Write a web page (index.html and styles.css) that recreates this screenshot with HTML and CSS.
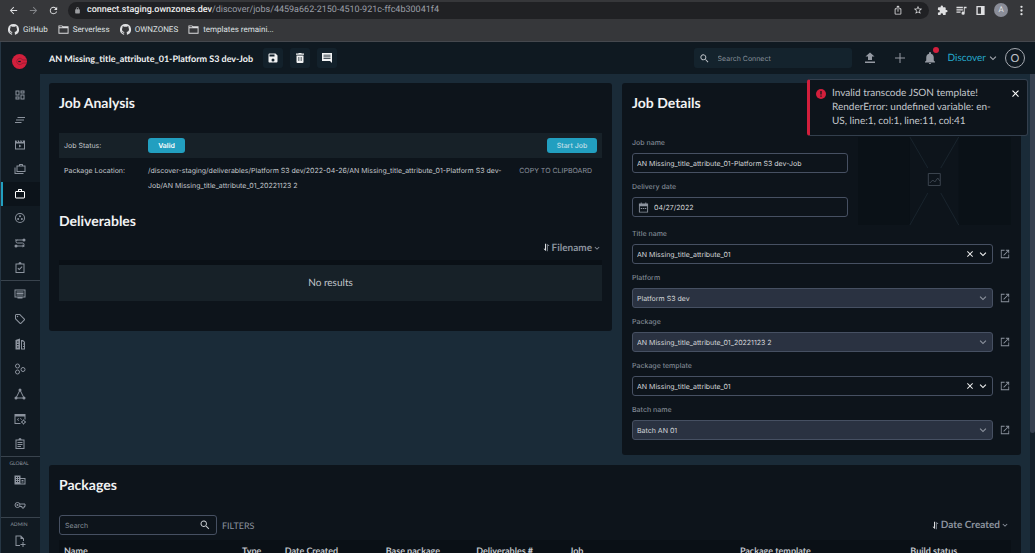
FILE: index.html
```html
<!doctype html>
<html lang="en">
  <head>
    <meta charset="UTF-8" />
    <meta name="viewport" content="width=device-width, initial-scale=1.0" />
    <title>AN Missing_title_attribute_01-Platform S3 dev-Job</title>
    <link rel="stylesheet" href="styles.css">
  </head>
  <body>
    <svg class="sprite" aria-hidden="true">
      <symbol id="back" viewBox="0 0 24 24"><path d="M20 11H7.8l5.6-5.6L12 4l-8 8 8 8 1.4-1.4L7.8 13H20z"/></symbol>
      <symbol id="forward" viewBox="0 0 24 24"><path d="M12 4l-1.4 1.4 5.6 5.6H4v2h12.2l-5.6 5.6L12 20l8-8z"/></symbol>
      <symbol id="reload" viewBox="0 0 24 24"><path d="M17.65 6.35A8 8 0 1 0 19.73 14h-2.08A6 6 0 1 1 12 6c1.66 0 3.14.69 4.22 1.78L13 11h7V4z"/></symbol>
      <symbol id="lock" viewBox="0 0 24 24"><path d="M18 8h-1V6A5 5 0 0 0 7 6v2H6a2 2 0 0 0-2 2v10c0 1.1.9 2 2 2h12a2 2 0 0 0 2-2V10a2 2 0 0 0-2-2zM9 6a3 3 0 0 1 6 0v2H9z"/></symbol>
      <symbol id="share" viewBox="0 0 24 24"><path d="M16 5l-1.4 1.4-1.6-1.6V16h-2V4.8L9.400 6.400 8 5l4-4zM20 10v11c0 1.100-.9 2-2 2H6a2 2 0 0 1-2-2V10c0-1.100.9-2 2-2h3v2H6v11h12V10h-3V8h3a2 2 0 0 1 2 2z"/></symbol>
      <symbol id="star" viewBox="0 0 24 24"><path d="M22 9.240l-7.190-.620L12 2 9.190 8.630 2 9.240l5.460 4.730L5.820 21 12 17.270 18.180 21l-1.630-7.030zM12 15.400l-3.760 2.270 1-4.280-3.320-2.880 4.380-.380L12 6.100l1.710 4.040 4.380.380-3.320 2.880 1 4.280z"/></symbol>
      <symbol id="puzzle" viewBox="0 0 24 24"><path d="M20.500 11H19V7a2 2 0 0 0-2-2h-4V3.500a2.500 2.500 0 0 0-5 0V5H4a2 2 0 0 0-2 2v3.800h1.500a2.700 2.700 0 0 1 0 5.400H2V20c0 1.100.9 2 2 2h3.800v-1.500a2.700 2.700 0 0 1 5.400 0V22H17a2 2 0 0 0 2-2v-4h1.500a2.500 2.500 0 0 0 0-5z"/></symbol>
      <symbol id="playlist" viewBox="0 0 24 24"><path d="M1 4h14v3H1zM1 9h14v3H1zM1 14h9v3H1zM17 4h6v3h-4v11a3.500 3.500 0 1 1-2-3.200z"/></symbol>
      <symbol id="panel" viewBox="0 0 24 24"><path d="M3 2h18v20H3zM6 5v14h7V5z" fill-rule="evenodd"/></symbol>
      <symbol id="dots" viewBox="0 0 24 24"><circle cx="12" cy="4" r="2.500"/><circle cx="12" cy="12" r="2.500"/><circle cx="12" cy="20" r="2.500"/></symbol>
      <symbol id="github" viewBox="0 0 16 16"><path d="M8 0a8 8 0 0 0-2.530 15.590c.4.070.55-.170.55-.380v-1.490c-2.230.480-2.700-.940-2.700-.940-.360-.930-.890-1.180-.890-1.180-.730-.5.060-.490.060-.490.800.060 1.230.830 1.230.830.720 1.220 1.870.870 2.330.660.070-.520.280-.870.510-1.070-1.780-.2-3.640-.890-3.640-3.950 0-.870.310-1.590.820-2.150-.080-.2-.360-1.020.080-2.120 0 0 .670-.210 2.200.820a7.600 7.600 0 0 1 4 0c1.530-1.040 2.200-.820 2.200-.820.440 1.100.160 1.920.080 2.120.510.560.820 1.270.820 2.150 0 3.070-1.870 3.750-3.650 3.950.290.250.540.730.540 1.480v2.200c0 .210.150.460.550.380A8 8 0 0 0 8 0z"/></symbol>
      <symbol id="folder" viewBox="0 0 24 24"><path d="M1 3h8l2 2h12v16H1zM3 9v10h18V9zM3 5v2h18V7H10.200l-2-2z" fill-rule="evenodd"/></symbol>
      <symbol id="logo" viewBox="0 0 24 24"><circle cx="12" cy="12" r="12"/><path class="cut" d="M24 9.500h-7a5 5 0 1 0 0 5H24"/><path class="slot" d="M10 11h4v2h-4z"/></symbol>
      <symbol id="save" viewBox="0 0 24 24"><path d="M17 3H5a2 2 0 0 0-2 2v14c0 1.100.9 2 2 2h14a2 2 0 0 0 2-2V7zm-5 16a3 3 0 1 1 0-6 3 3 0 0 1 0 6zm3-10H5V5h10z"/></symbol>
      <symbol id="trash" viewBox="0 0 24 24"><path fill-rule="evenodd" d="M5 7h14v13a2 2 0 0 1-2 2H7a2 2 0 0 1-2-2zM15.500 3l-1-1h-5l-1 1H4v2.500h16V3zM9 10v8h1.500v-8zM13.500 10v8H15v-8z"/></symbol>
      <symbol id="comment" viewBox="0 0 24 24"><path fill-rule="evenodd" d="M22 2H2v16h16l4 4zM5 5.500h14v1.700H5zM5 9h14v1.700H5zM5 12.500h14v1.700H5z"/></symbol>
      <symbol id="search" viewBox="0 0 24 24"><path d="M15.500 14h-.8l-.3-.3a6.500 6.500 0 1 0-.7.7l.3.300v.8l5 5 1.500-1.500zm-6 0a4.500 4.500 0 1 1 0-9 4.500 4.500 0 0 1 0 9z"/></symbol>
      <symbol id="upload" viewBox="0 0 24 24"><path d="M8 16h8v-7h5l-9-8-9 8h5zM2 19h20v3H2z"/></symbol>
      <symbol id="plus" viewBox="0 0 24 24"><path d="M22 13h-9v9h-2v-9H2v-2h9V2h2v9h9z"/></symbol>
      <symbol id="bell" viewBox="0 0 24 24"><path d="M12 24c1.300 0 2.300-1 2.300-2H9.700c0 1 1 2 2.300 2zm7.500-7v-6c0-3.500-2-6.500-5.500-7.300V2a2 2 0 0 0-4 0v1.700C6.500 4.500 4.500 7.500 4.500 11v6L2 19.500V21h20v-1.500z"/></symbol>
      <symbol id="chevron" viewBox="0 0 24 24"><path d="M4.500 6.500L12 14l7.500-7.500L22 9 12 19 2 9z"/></symbol>
      <symbol id="close" viewBox="0 0 24 24"><path d="M21 5l-2-2-7 7-7-7-2 2 7 7-7 7 2 2 7-7 7 7 2-2-7-7z"/></symbol>
      <symbol id="dashboard" viewBox="0 0 24 24"><path d="M19 5v2h-4V5h4M9 5v6H5V5h4m10 8v6h-4v-6h4M9 17v2H5v-2h4M21 3h-8v6h8zM11 3H3v10h8zm10 8h-8v10h8zm-10 4H3v6h8z"/></symbol>
      <symbol id="lines" viewBox="0 0 24 24"><path d="M7 6h15v2H7zM4 11h16v2H4zM2 16h13v2H2z"/></symbol>
      <symbol id="film" viewBox="0 0 24 24"><path fill-rule="evenodd" d="M2 3h3l1 3h2L7 3h3l1 3h2l-1-3h3l1 3h2l-1-3h5v18H2zM4 9v10h16V9zM10 11l5 3-5 3z"/></symbol>
      <symbol id="cases" viewBox="0 0 24 24"><path fill-rule="evenodd" d="M1 9h2v11h16v2H1zM5 5h5V3l1-1h6l1 1v2h5v13H5zM12 5h4V4h-4zM7 7v9h14V7z"/></symbol>
      <symbol id="case" viewBox="0 0 24 24"><path fill-rule="evenodd" d="M8 6V3l1-1h6l1 1v3h4l2 2v11l-2 2H4l-2-2V8l2-2zm2 0h4V4h-4zM4 8v11h16V8z"/></symbol>
      <symbol id="reel" viewBox="0 0 24 24"><path fill-rule="evenodd" d="M12 2a10 10 0 1 0 0 20 10 10 0 0 0 0-20zm0 2a8 8 0 1 1 0 16 8 8 0 0 1 0-16z"/><circle cx="12" cy="8.500" r="2"/><circle cx="8.300" cy="14" r="2"/><circle cx="15.700" cy="14" r="2"/></symbol>
      <symbol id="route" viewBox="0 0 24 24"><path class="stroke" d="M2 6h16M7 6a3 3 0 0 0 0 6h10a3 3 0 0 1 0 6H6"/><circle cx="20" cy="6" r="3"/><circle cx="4" cy="18" r="3"/><path d="M17 15l5 3-5 3z"/></symbol>
      <symbol id="task" viewBox="0 0 24 24"><path fill-rule="evenodd" d="M3 3h6a3 3 0 0 1 6 0h6v19H3zM5 5v15h14V5zM17 10l-6.500 6.500L7 13l1.400-1.400 2.100 2.100 5.100-5.100z"/></symbol>
      <symbol id="monitor" viewBox="0 0 24 24"><path fill-rule="evenodd" d="M1 3h22v16h-6v2H7v-2H1zM3 5v12h18V5zM5 7h14v2H5zM5 10h14v2H5zM5 13h14v2H5z"/></symbol>
      <symbol id="tag" viewBox="0 0 24 24"><path fill-rule="evenodd" d="M2 4l2-2h8l10 10v2l-8 8h-2L2 12zm2 0v7l9 9 7-7-9-9z"/><circle cx="7" cy="7" r="1.500"/></symbol>
      <symbol id="tower" viewBox="0 0 24 24"><path fill-rule="evenodd" d="M3 4l9-3v22H3zM6 7v2h3V7zM6 12v2h3v-2zM6 17v2h3v-2zM14 4h4l4 4v15h-8zM16 7v14h4v-3h-2v-2h2v-3h-2v-2h2V9l-2-2z"/></symbol>
      <symbol id="rings" viewBox="0 0 24 24"><g class="stroke"><circle cx="7" cy="6" r="4"/><circle cx="7" cy="18" r="4"/><circle cx="18" cy="13" r="4"/></g></symbol>
      <symbol id="nodes" viewBox="0 0 24 24"><path class="stroke" d="M11 6L5 18M13 6l6 12M6 20h12"/><circle cx="12" cy="4" r="3"/><circle cx="4" cy="20" r="3"/><circle cx="20" cy="20" r="3"/></symbol>
      <symbol id="codegear" viewBox="0 0 24 24"><path fill-rule="evenodd" d="M1 2h22v11h-2V7H3v13h10v2H1zM9 10l1 1-2 2 2 2-1 1-3-3zM13 10l3 3-1 1-3-3z"/><circle class="stroke" cx="19" cy="18" r="3"/><path d="M18 13h2v2h-2zM18 21h2v2h-2zM14 17h2v2h-2zM22 17h2v2h-2z"/></symbol>
      <symbol id="clipboard" viewBox="0 0 24 24"><path fill-rule="evenodd" d="M3 3h6a3 3 0 0 1 6 0h6v19H3zM5 5v15h14V5zM7 8h10v2H7zM7 12h10v2H7zM7 16h7v2H7z"/></symbol>
      <symbol id="building" viewBox="0 0 24 24"><path fill-rule="evenodd" d="M1 3h12v5h10v13H1zM4 6v2h2V6zM8 6v2h2V6zM4 10v2h2v-2zM8 10v2h2v-2zM4 14v2h2v-2zM8 14v2h2v-2zM13 10v9h8v-9zM15 12h4v2h-4zM15 15h4v2h-4z"/></symbol>
      <symbol id="key" viewBox="0 0 24 24"><g class="stroke"><circle cx="7" cy="12" r="5"/><path d="M12 10h10v5h-2v3h-4v-3h-4"/></g><circle cx="7" cy="12" r="2"/></symbol>
      <symbol id="fileplus" viewBox="0 0 24 24"><path d="M4 1h10l6 6v5h-2V8h-5V3H5v17h7v2H3V1zM17 14h2v4h4v2h-4v4h-2v-4h-4v-2h4z"/></symbol>
      <symbol id="sort" viewBox="0 0 24 24"><path class="lit" d="M8 2h3v20L4 15h4z"/><path d="M16 22h-2V2l6 6h-4z"/></symbol>
      <symbol id="calendar" viewBox="0 0 24 24"><path fill-rule="evenodd" d="M6 1h2v2h8V1h2v2h4v20H2V3h4zM4 9v12h16V9zM6 13h3v2H6zM10.500 13h3v2h-3zM15 13h3v2h-3z"/></symbol>
      <symbol id="open" viewBox="0 0 24 24"><path d="M20 20H4V4h7V2H2v20h20v-9h-2zM14 2v2h4.600L8 14.600 9.400 16 20 5.400V10h2V2z"/></symbol>
      <symbol id="alert" viewBox="0 0 24 24"><circle cx="12" cy="12" r="12"/><path class="mark" d="M10.500 5h3v8h-3zM10.500 15.500h3v3h-3z"/></symbol>
    </svg>

    <div class="browser">
      <div class="toolbar">
        <button class="nav-button" aria-label="Back"><svg><use href="#back"/></svg></button>
        <button class="nav-button off" aria-label="Forward"><svg><use href="#forward"/></svg></button>
        <button class="nav-button" aria-label="Reload"><svg><use href="#reload"/></svg></button>
        <div class="address">
          <svg class="lock"><use href="#lock"/></svg>
          <span class="url"><b>connect.staging.ownzones.dev</b>/discover/jobs/4459a662-2150-4510-921c-ffc4b30041f4</span>
          <svg><use href="#share"/></svg>
          <svg><use href="#star"/></svg>
        </div>
        <div class="extensions">
          <svg><use href="#puzzle"/></svg>
          <svg><use href="#playlist"/></svg>
          <svg><use href="#panel"/></svg>
          <span class="profile">A</span>
          <svg><use href="#dots"/></svg>
        </div>
      </div>
      <nav class="bookmarks">
        <a href="#"><svg><use href="#github"/></svg>GitHub</a>
        <a href="#"><svg><use href="#folder"/></svg>Serverless</a>
        <a href="#"><svg><use href="#github"/></svg>OWNZONES</a>
        <a href="#"><svg><use href="#folder"/></svg>templates remaini...</a>
      </nav>
    </div>

    <div class="app">
      <aside class="sidebar">
        <a class="logo" href="#" aria-label="Home"><svg><use href="#logo"/></svg></a>
        <ul class="main-links">
          <li><a href="#" aria-label="Dashboard"><svg><use href="#dashboard"/></svg></a></li>
          <li><a href="#" aria-label="Activity"><svg><use href="#lines"/></svg></a></li>
          <li><a href="#" aria-label="Titles"><svg><use href="#film"/></svg></a></li>
          <li><a href="#" aria-label="Batches"><svg><use href="#cases"/></svg></a></li>
          <li><a class="active" href="#" aria-label="Jobs"><svg><use href="#case"/></svg></a></li>
          <li><a href="#" aria-label="Media"><svg><use href="#reel"/></svg></a></li>
          <li><a href="#" aria-label="Workflows"><svg><use href="#route"/></svg></a></li>
          <li><a href="#" aria-label="Tasks"><svg><use href="#task"/></svg></a></li>
        </ul>
        <ul class="tool-links">
          <li><a href="#" aria-label="Platforms"><svg><use href="#monitor"/></svg></a></li>
          <li><a href="#" aria-label="Tags"><svg><use href="#tag"/></svg></a></li>
          <li><a href="#" aria-label="Companies"><svg><use href="#tower"/></svg></a></li>
          <li><a href="#" aria-label="Groups"><svg><use href="#rings"/></svg></a></li>
          <li><a href="#" aria-label="Network"><svg><use href="#nodes"/></svg></a></li>
          <li><a href="#" aria-label="Templates"><svg><use href="#codegear"/></svg></a></li>
          <li><a href="#" aria-label="Reports"><svg><use href="#clipboard"/></svg></a></li>
        </ul>
        <h3>GLOBAL</h3>
        <ul class="global-links">
          <li><a href="#" aria-label="Organizations"><svg><use href="#building"/></svg></a></li>
          <li><a href="#" aria-label="Keys"><svg><use href="#key"/></svg></a></li>
        </ul>
        <h3>ADMIN</h3>
        <ul>
          <li><a href="#" aria-label="New file"><svg><use href="#fileplus"/></svg></a></li>
        </ul>
      </aside>

      <div class="workspace">
        <header class="header">
          <h1>AN Missing_title_attribute_01-Platform S3 dev-Job</h1>
          <div class="actions">
            <button aria-label="Save"><svg><use href="#save"/></svg></button>
            <button aria-label="Delete"><svg><use href="#trash"/></svg></button>
            <button aria-label="Comments"><svg><use href="#comment"/></svg></button>
          </div>
          <label class="global-search">
            <svg><use href="#search"/></svg>
            <input type="text" placeholder="Search Connect" aria-label="Search Connect" />
          </label>
          <div class="tools">
            <button aria-label="Upload"><svg><use href="#upload"/></svg></button>
            <button aria-label="Add"><svg><use href="#plus"/></svg></button>
            <button class="bell" aria-label="Notifications"><svg><use href="#bell"/></svg></button>
          </div>
          <button class="discover">Discover <svg><use href="#chevron"/></svg></button>
          <button class="avatar">O</button>
        </header>

        <div class="page">
          <main class="content">
            <section class="panel analysis">
              <h2>Job Analysis</h2>
              <div class="info-row status">
                <span>Job Status:</span>
                <div><span class="chip">Valid</span></div>
                <button class="start">Start Job</button>
              </div>
              <div class="info-row location">
                <span>Package Location:</span>
                <p>/discover-staging/deliverables/Platform S3 dev/2022-04-26/AN Missing_title_attribute_01-Platform S3 dev-Job/AN Missing_title_attribute_01_20221123 2</p>
                <button class="text-button">COPY TO CLIPBOARD</button>
              </div>
              <h2>Deliverables</h2>
              <div class="list-bar">
                <button class="sort"><svg><use href="#sort"/></svg>Filename <svg class="small"><use href="#chevron"/></svg></button>
              </div>
              <div class="empty">No results</div>
            </section>

            <section class="panel details">
              <h2>Job Details</h2>
              <div class="top-fields">
                <div>
                  <div class="field">
                    <label for="jobName">Job name</label>
                    <input type="text" id="jobName" value="AN Missing_title_attribute_01-Platform S3 dev-Job" />
                  </div>
                  <div class="field date">
                    <label for="deliveryDate">Delivery date</label>
                    <div class="control">
                      <svg><use href="#calendar"/></svg>
                      <input type="text" id="deliveryDate" value="04/27/2022" />
                    </div>
                  </div>
                </div>
                <svg class="poster" viewBox="0 0 153 88" preserveAspectRatio="none">
                  <path class="shade" d="M0 0h52v88H0zM101 0h52v88h-52z"/>
                  <path class="cross" d="M52 0l18 31M101 0L83 31M52 88l18-32M101 88L83 56"/>
                  <path class="cross frame" d="M70.500 36.500h12v12h-12zM72 46l3-3 2 2 3-4 2 3"/>
                </svg>
              </div>
              <div class="field">
                <label for="titleName">Title name</label>
                <div class="control">
                  <select id="titleName"><option>AN Missing_title_attribute_01</option></select>
                  <button class="clear" aria-label="Clear title"><svg><use href="#close"/></svg></button>
                  <svg class="arrow"><use href="#chevron"/></svg>
                  <a href="#" aria-label="Open title"><svg><use href="#open"/></svg></a>
                </div>
              </div>
              <div class="field">
                <label for="platform">Platform</label>
                <div class="control">
                  <select id="platform" disabled><option>Platform S3 dev</option></select>
                  <svg class="arrow"><use href="#chevron"/></svg>
                  <a href="#" aria-label="Open platform"><svg><use href="#open"/></svg></a>
                </div>
              </div>
              <div class="field">
                <label for="package">Package</label>
                <div class="control">
                  <select id="package" disabled><option>AN Missing_title_attribute_01_20221123 2</option></select>
                  <svg class="arrow"><use href="#chevron"/></svg>
                  <a href="#" aria-label="Open package"><svg><use href="#open"/></svg></a>
                </div>
              </div>
              <div class="field">
                <label for="packageTemplate">Package template</label>
                <div class="control">
                  <select id="packageTemplate"><option>AN Missing_title_attribute_01</option></select>
                  <button class="clear" aria-label="Clear template"><svg><use href="#close"/></svg></button>
                  <svg class="arrow"><use href="#chevron"/></svg>
                  <a href="#" aria-label="Open template"><svg><use href="#open"/></svg></a>
                </div>
              </div>
              <div class="field">
                <label for="batchName">Batch name</label>
                <div class="control">
                  <select id="batchName" disabled><option>Batch AN 01</option></select>
                  <svg class="arrow"><use href="#chevron"/></svg>
                  <a href="#" aria-label="Open batch"><svg><use href="#open"/></svg></a>
                </div>
              </div>
            </section>

            <section class="panel packages">
              <h2>Packages</h2>
              <div class="filter-bar">
                <label class="package-search">
                  <input type="text" placeholder="Search" aria-label="Search packages" />
                  <svg><use href="#search"/></svg>
                </label>
                <button class="text-button">FILTERS</button>
                <button class="sort"><svg><use href="#sort"/></svg>Date Created <svg class="small"><use href="#chevron"/></svg></button>
              </div>
              <table>
                <colgroup>
                  <col class="w-name" /><col class="w-type" /><col class="w-date" /><col class="w-base" />
                  <col class="w-count" /><col class="w-job" /><col class="w-template" /><col />
                </colgroup>
                <thead>
                  <tr>
                    <th>Name</th>
                    <th>Type</th>
                    <th>Date Created</th>
                    <th>Base package</th>
                    <th>Deliverables #</th>
                    <th>Job</th>
                    <th>Package template</th>
                    <th>Build status</th>
                  </tr>
                </thead>
              </table>
            </section>
          </main>
          <div class="scrollbar"><div class="thumb"></div></div>
        </div>
      </div>
    </div>

    <div class="toast" role="alert">
      <svg class="alert-icon"><use href="#alert"/></svg>
      <p>Invalid transcode JSON template! RenderError: undefined variable: en-US, line:1, col:1, line:11, col:41</p>
      <button aria-label="Dismiss"><svg><use href="#close"/></svg></button>
    </div>
  </body>
</html>
```
FILE: styles.css
```css
* {
  box-sizing: border-box;
}
body {
  margin: 0;
  height: 100vh;
  display: flex;
  flex-direction: column;
  overflow: hidden;
  background: #1a2b38;
  color: #c3c7cc;
  font-family: Lato, sans-serif;
  font-size: 8px;
  text-rendering: geometricPrecision;
}
h1,
h2,
h3,
p,
ul {
  margin: 0;
  padding: 0;
}
ul {
  list-style: none;
}
button,
input,
select {
  font: inherit;
  color: inherit;
  margin: 0;
  text-rendering: inherit;
}
button {
  padding: 0;
  border: none;
  background: none;
  cursor: pointer;
}
a {
  color: inherit;
  text-decoration: none;
}
svg {
  display: block;
  width: 12px;
  height: 12px;
  flex: none;
  fill: currentColor;
}
.sprite {
  position: absolute;
  width: 0;
  height: 0;
}
.stroke {
  fill: none;
  stroke: currentColor;
  stroke-width: 2;
}

/* browser window */
.browser {
  background: #36373a;
  border-bottom: 1px solid #45484e;
  font-family: Roboto, sans-serif;
  color: #dfe0e2;
}
.toolbar {
  display: flex;
  align-items: center;
  height: 20px;
  padding: 0 8px;
}
.nav-button {
  width: 20px;
}
.nav-button svg {
  width: 11px;
  height: 11px;
}
.off {
  color: #84868a;
}
.address {
  display: flex;
  flex: 1;
  align-items: center;
  gap: 10px;
  height: 17px;
  padding: 0 6px;
  border-radius: 9px;
  background: #202124;
}
.address svg {
  width: 10px;
  height: 10px;
}
.address .lock {
  width: 7px;
  height: 7px;
  color: #9b9da1;
}
.url {
  flex: 1;
  margin-left: -4px;
  color: #9b9fa7;
  font-size: 9px;
}
.url b {
  color: #eceded;
  font-weight: 500;
}
.extensions {
  display: flex;
  align-items: center;
  gap: 8px;
  margin-left: 8px;
}
.extensions svg {
  width: 11px;
  height: 11px;
}
.profile {
  width: 14px;
  border-radius: 50%;
  background: #8a8d98;
  line-height: 14px;
  text-align: center;
}
.bookmarks {
  display: flex;
  align-items: center;
  gap: 10px;
  height: 21px;
  padding: 0 8px 2px;
}
.bookmarks a {
  display: flex;
  align-items: center;
  gap: 4px;
}
.bookmarks svg {
  width: 11px;
  height: 11px;
}

/* sidebar */
.app {
  display: flex;
  flex: 1;
  min-height: 0;
}
.sidebar {
  width: 40px;
  flex: none;
  overflow: hidden;
  border-left: 1px solid #263644;
  background: #111a22;
  color: #8c939e;
}
.logo {
  display: flex;
  justify-content: center;
  padding: 12px 2px 14px 0;
  color: #d21f3c;
}
.logo svg {
  width: 15px;
  height: 15px;
}
.cut {
  fill: none;
  stroke: #7c1c2e;
  stroke-width: 1;
}
.slot {
  fill: #111a22;
}
.sidebar ul {
  display: grid;
  grid-auto-rows: 1fr;
}
.sidebar .main-links {
  height: 197px;
}
.sidebar .tool-links {
  height: 176px;
  border-top: 1px solid #39434d;
}
.sidebar .global-links {
  height: 49px;
}
.sidebar li a {
  display: flex;
  align-items: center;
  justify-content: center;
  height: 100%;
  min-height: 24px;
  padding-right: 4px;
  border-left: 2px solid transparent;
}
.sidebar li .active {
  border-color: #229fc0;
  background: #0c131a;
  color: #fff;
}
.sidebar h3 {
  padding: 3px 3px 0 0;
  border-top: 1px solid #39434d;
  font-size: 5px;
  font-weight: 400;
  line-height: 8px;
  text-align: center;
}

/* header */
.workspace {
  display: flex;
  flex: 1;
  flex-direction: column;
  min-width: 0;
}
.header {
  display: flex;
  align-items: center;
  height: 32px;
  flex: none;
  padding: 0 10px 0 9px;
  background: #0f1921;
}
.header h1 {
  color: #f1f2f3;
  font-size: 9px;
  font-weight: 700;
  white-space: nowrap;
}
.actions {
  display: flex;
  gap: 7px;
  margin-left: 10px;
}
.actions button {
  width: 20px;
  height: 20px;
  border-radius: 3px;
  background: #13212b;
  color: #f1f2f3;
}
.actions svg {
  margin: auto;
}
.global-search {
  display: flex;
  align-items: center;
  width: 158px;
  height: 20px;
  margin-left: auto;
  padding: 0 5px;
  border-radius: 3px;
  background: #14232d;
}
.global-search svg {
  width: 11px;
  height: 11px;
}
.global-search input,
.package-search input {
  flex: 1;
  min-width: 0;
  padding: 0;
  border: none;
  outline: none;
  background: none;
}
.global-search input {
  margin-left: 8px;
}
::placeholder {
  color: #87909a;
  opacity: 1;
}
.tools {
  display: flex;
  gap: 18px;
  margin: 0 12px;
  color: #959aa3;
}
.bell {
  position: relative;
}
.bell::after {
  content: "";
  position: absolute;
  top: -5px;
  right: -3px;
  width: 6px;
  height: 6px;
  border-radius: 50%;
  background: #d21f3c;
}
.discover {
  display: flex;
  align-items: center;
  gap: 3px;
  color: #24a9cc;
  font-size: 10px;
}
.discover svg {
  width: 8px;
  height: 8px;
  color: #a5a9b0;
}
.avatar {
  width: 20px;
  height: 20px;
  margin-left: 8px;
  border: 1px solid #a5a9b0;
  border-radius: 50%;
  font-size: 11px;
}

/* content */
.page {
  display: flex;
  flex: 1;
  min-height: 0;
}
.content {
  display: grid;
  flex: 1;
  grid-template-columns: 563fr 399fr;
  align-content: start;
  align-items: start;
  gap: 10px;
  min-width: 0;
  padding: 9px;
  overflow: hidden;
}
.scrollbar {
  width: 5px;
  background: #14202a;
}
.thumb {
  height: 75%;
  border-radius: 0 0 3px 3px;
  background: #374150;
}
.panel {
  min-width: 0;
  padding: 10px;
  border-radius: 3px;
  background: #0d141b;
}
.panel h2 {
  color: #f1f2f3;
  font-size: 14px;
  font-weight: 700;
  line-height: 20px;
}
.analysis {
  padding-bottom: 30px;
}
.info-row,
.field,
.global-search,
.package-search {
  font-family: Inter, sans-serif;
  font-size: 7px;
}
.info-row {
  display: grid;
  grid-template-columns: 84px 1fr auto;
  padding: 5px;
  line-height: 15px;
}
.status {
  margin-top: 20px;
  background: #172128;
}
.location {
  margin-bottom: 13px;
}
.chip,
.start {
  display: inline-block;
  border-radius: 3px;
  background: #229fc0;
  line-height: 15px;
  text-align: center;
}
.chip {
  width: 37px;
  color: #fff;
  font-weight: 600;
}
.start {
  width: 50px;
  color: #c3dfe8;
  font-weight: 500;
}
.text-button {
  align-self: start;
  color: #8c939e;
  line-height: 15px;
}
.location .text-button {
  margin: 0 5px 0 4px;
}
.list-bar {
  display: flex;
  justify-content: flex-end;
  height: 34px;
  padding: 4px 2px 0 0;
  border-bottom: 5px solid #0a1016;
}
.sort {
  display: flex;
  align-items: center;
  color: #8c939e;
  font-size: 10px;
  font-weight: 700;
}
.sort svg {
  width: 9px;
  height: 9px;
  margin-right: 1px;
}
.sort .small {
  width: 6px;
  height: 6px;
  margin: 0 0 0 2px;
}
.lit {
  fill: #dfe1e4;
}
.empty {
  background: #172128;
  font-size: 10px;
  line-height: 36px;
  text-align: center;
}

/* job details form */
.details {
  padding-bottom: 15px;
}
.top-fields {
  display: grid;
  grid-template-columns: 217fr 153fr;
  gap: 10px;
  margin: 24px 0 3px;
}
.field + .field {
  margin-top: 8px;
}
.field label {
  display: block;
  margin-bottom: 4px;
  color: #7f8792;
  font-weight: 500;
  line-height: 12px;
}
.field input,
.field select {
  display: block;
  width: 100%;
  height: 20px;
  padding: 0 4px;
  border: 1px solid #465062;
  border-radius: 3px;
  background: #0d141b;
  color: #d5d7da;
  appearance: none;
}
.field select:disabled {
  background: #2a3241;
  opacity: 1;
}
.control {
  position: relative;
  display: flex;
  align-items: center;
}
.control a {
  flex: none;
  margin-left: 7px;
  padding-right: 1px;
  color: #8c939e;
}
.control a svg {
  width: 10px;
  height: 10px;
}
.arrow,
.clear {
  position: absolute;
  right: 24px;
  color: #eceded;
  pointer-events: none;
}
.arrow {
  width: 8px;
  height: 8px;
}
.clear {
  right: 37px;
  pointer-events: auto;
}
.clear svg {
  width: 8px;
  height: 8px;
}
select:disabled ~ .arrow {
  color: #8c939e;
}
.date svg {
  position: absolute;
  left: 6px;
  width: 11px;
  height: 11px;
  color: #8c939e;
}
.field.date input {
  padding-left: 21px;
}
.poster {
  width: 100%;
  height: 88px;
}
.shade {
  fill: #0a1117;
}
.cross {
  fill: none;
  stroke: #19242d;
}
.frame {
  stroke: #3a434d;
}

/* packages */
.packages {
  grid-column: 1 / -1;
}
.filter-bar {
  display: flex;
  align-items: center;
  gap: 5px;
  margin: 20px 0 5px;
}
.package-search {
  display: flex;
  align-items: center;
  width: 158px;
  height: 20px;
  padding: 0 5px;
  border: 1px solid #465062;
  border-radius: 3px;
}
.filter-bar .text-button {
  align-self: center;
  font-size: 9px;
}
.filter-bar .sort {
  margin-left: auto;
  padding-right: 3px;
}
table {
  width: 100%;
  table-layout: fixed;
  border-collapse: collapse;
  background: #0a1016;
}
th {
  padding: 5px;
  font-size: 9px;
  line-height: 12px;
  text-align: left;
  white-space: nowrap;
}
.w-name {
  width: 18.7%;
}
.w-type {
  width: 4.5%;
}
.w-date {
  width: 10.6%;
}
.w-base {
  width: 9.5%;
}
.w-count {
  width: 9.8%;
}
.w-job {
  width: 17.9%;
}
.w-template {
  width: 17.9%;
}

/* error message */
.toast {
  position: absolute;
  top: 79px;
  right: 7px;
  display: flex;
  align-items: flex-start;
  width: 221px;
  padding: 6px 7px 7px 6px;
  border: 1px solid #333f4d;
  border-left: 3px solid #d21f3c;
  border-radius: 3px;
  background: #0d141b;
  font-size: 10px;
  line-height: 14px;
}
.toast p {
  flex: 1;
  margin: 0 16px 0 6px;
}
.alert-icon {
  width: 10px;
  height: 10px;
  margin-top: 3px;
  color: #d21f3c;
}
.mark {
  fill: #0d141b;
}
.toast button {
  margin-top: 3px;
  color: #fff;
}
.toast button svg {
  width: 9px;
  height: 9px;
}
```
